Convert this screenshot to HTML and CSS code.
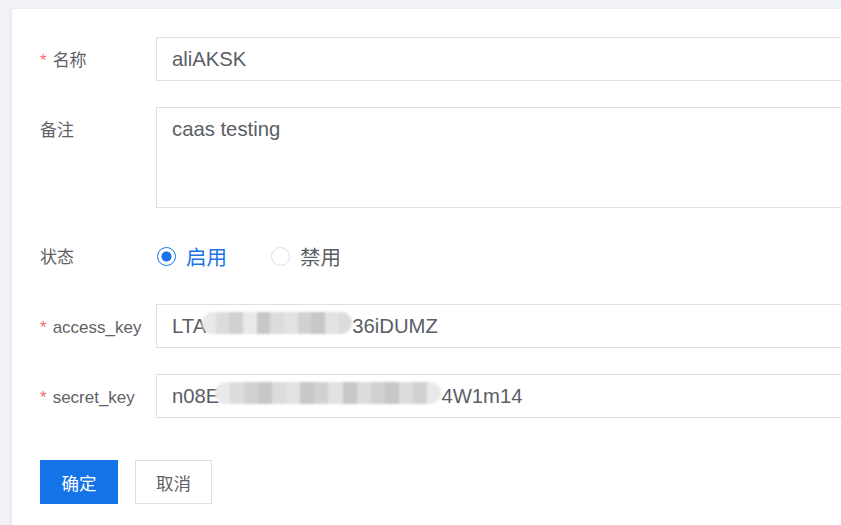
FILE: index.html
```html
<!DOCTYPE html>
<html lang="zh-CN">
<head>
<meta charset="utf-8">
<title>AKSK</title>
<link rel="stylesheet" href="styles.css">
</head>
<body>
<div class="page">
  <div class="card">
    <form class="form">
      <div class="row">
        <label class="label"><span class="req">*</span>名称</label>
        <div class="field input">aliAKSK</div>
      </div>
      <div class="row">
        <label class="label">备注</label>
        <div class="field textarea">caas testing</div>
      </div>
      <div class="row">
        <label class="label">状态</label>
        <div class="radios">
          <span class="radio checked"><span class="dot"></span>启用</span>
          <span class="radio"><span class="dot"></span>禁用</span>
        </div>
      </div>
      <div class="row">
        <label class="label"><span class="req">*</span>access_key</label>
        <div class="field input secret">
          <span>LTA</span><span class="mosaic m1"><i class="c1"></i><i class="c2"></i><i class="c3"></i><i class="c1"></i><i class="c4"></i><i class="c2"></i><i class="c5"></i><i class="c3"></i><i class="c4"></i><i class="c5"></i><i class="c2"></i></span><span>36iDUMZ</span>
        </div>
      </div>
      <div class="row">
        <label class="label"><span class="req">*</span>secret_key</label>
        <div class="field input secret">
          <span>n08E</span><span class="mosaic m2"><i class="c1"></i><i class="c2"></i><i class="c3"></i><i class="c4"></i><i class="c2"></i><i class="c5"></i><i class="c4"></i><i class="c3"></i><i class="c5"></i><i class="c4"></i><i class="c2"></i><i class="c3"></i><i class="c4"></i><i class="c2"></i><i class="c3"></i><i class="c1"></i></span><span>4W1m14</span>
        </div>
      </div>
      <div class="actions">
        <button type="button" class="btn primary">确定</button>
        <button type="button" class="btn">取消</button>
      </div>
    </form>
  </div>
</div>
</body>
</html>
```

FILE: styles.css
```css
html, body {
  margin: 0;
  padding: 0;
  background: #f0f2f5;
  overflow: hidden;
}
body {
  font-family: "Liberation Sans", "Noto Sans CJK SC", sans-serif;
  color: #606266;
}
.page {
  padding: 9px 0 0 12px;
  height: 516px;
}
.card {
  background: #fff;
  height: 100%;
  box-shadow: -1px 0 3px rgba(0,0,0,0.06);
}
.form {
  padding: 28px 0 0 28px;
  display: flex;
  flex-direction: column;
  gap: 26px;
}
.row {
  display: flex;
  align-items: flex-start;
}
.label {
  width: 116px;
  height: 44px;
  flex: none;
  line-height: 47px;
  font-size: 17px;
  color: #5f6266;
}
.req {
  color: #f56c6c;
  margin-right: 6px;
}
.field {
  width: 720px;
  flex: none;
  box-sizing: border-box;
  border: 1px solid #dcdfe6;
  padding: 0 15px;
  font-size: 20.3px;
  color: #5a5e66;
  line-height: 42px;
  white-space: nowrap;
}
.input { height: 44px; }
.textarea { height: 101px; }
.secret {
  display: flex;
  align-items: center;
}
.mosaic {
  display: inline-flex;
  height: 22px;
  border-radius: 11px;
  overflow: hidden;
  filter: blur(1.2px);
  margin-top: -6px;
}
.m1 { width: 150px; margin-left: -4px; }
.m2 { width: 226px; margin-left: -4px; }
.mosaic i {
  flex: 1;
  height: 100%;
  display: block;
}
.c1 { background: #e9e9ea; }
.c2 { background: #dcdcdd; }
.c3 { background: #d0d1d3; }
.c4 { background: #c6c7c9; }
.c5 { background: #e2e2e3; }
.radios {
  height: 44px;
  display: flex;
  align-items: center;
  gap: 44px;
  padding-left: 1px;
}
.radio {
  display: inline-flex;
  align-items: center;
  gap: 10px;
  font-size: 20.5px;
  color: #5a5e66;
}
.radio .dot {
  width: 19px;
  height: 19px;
  box-sizing: border-box;
  border: 1px solid #dcdfe6;
  border-radius: 50%;
  background: #fff;
}
.radio.checked { color: #1a73e8; }
.radio.checked .dot {
  border: 1.5px solid #1a73e8;
  background: radial-gradient(circle, #1a73e8 0 4.8px, #fff 5.3px);
}
.actions {
  display: flex;
  gap: 17px;
  margin-top: 16px;
}
.btn {
  height: 44px;
  width: 77px;
  box-sizing: border-box;
  border: 1px solid #dcdfe6;
  background: #fff;
  color: #5f6266;
  font-family: "Liberation Sans", "Noto Sans CJK SC", sans-serif;
  font-size: 17.5px;
  padding: 0;
}
.btn.primary {
  width: 78px;
  background: #1473e6;
  border-color: #1473e6;
  color: #fff;
}
```
